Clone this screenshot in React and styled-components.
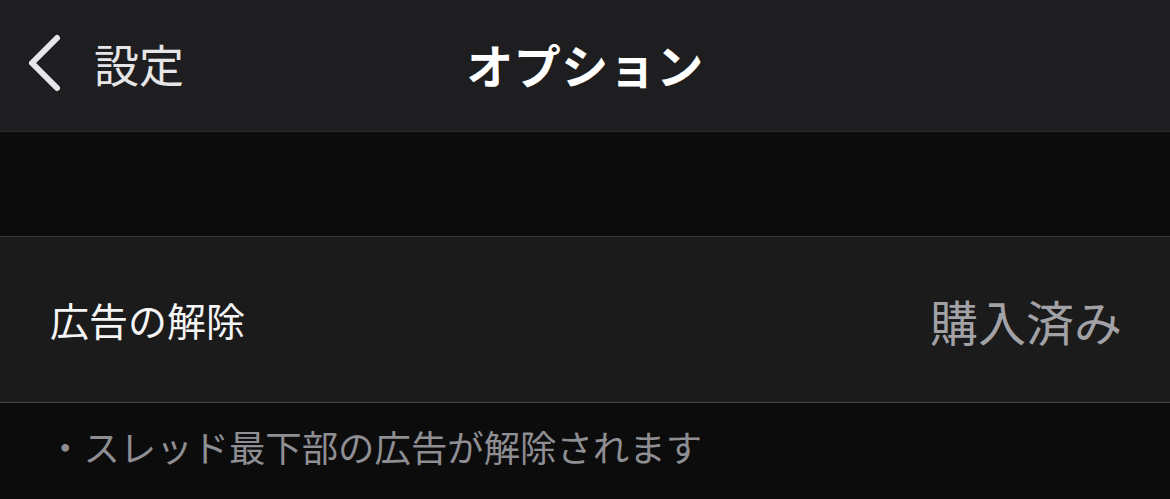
import React from "react";
import styled, { createGlobalStyle } from "styled-components";

const GlobalStyle = createGlobalStyle`
  html, body {
    margin: 0;
    padding: 0;
    background-color: #0c0c0c;
  }
  body {
    font-family: "Noto Sans CJK JP", "Noto Sans", sans-serif;
  }
`;

const Screen = styled.div`
  width: 1170px;
  height: 499px;
  overflow: hidden;
  background-color: #0c0c0c;
  display: flex;
  flex-direction: column;
`;

const NavBar = styled.header`
  height: 132px;
  box-sizing: border-box;
  padding-bottom: 5px;
  flex-shrink: 0;
  background-color: #1e1e20;
  border-bottom: 1px solid #2c2c2e;
  display: grid;
  grid-template-columns: 1fr auto 1fr;
  align-items: center;
`;

const BackButton = styled.div`
  display: flex;
  align-items: center;
  gap: 32px;
  padding-left: 26px;
  color: #e6e6e8;
  font-size: 45px;
  line-height: 1;
`;

const Title = styled.h1`
  margin: 0;
  color: #ffffff;
  font-size: 47px;
  font-weight: 700;
  line-height: 1;
  letter-spacing: 0.5px;
`;

const Spacer = styled.div`
  height: 105px;
  box-sizing: border-box;
  flex-shrink: 0;
  border-bottom: 1px solid #3a3a3c;
`;

const Row = styled.div`
  height: 166px;
  box-sizing: border-box;
  flex-shrink: 0;
  background-color: #1b1b1b;
  border-bottom: 1px solid #48484a;
  display: flex;
  align-items: center;
  justify-content: space-between;
  padding: 0 48px 0 50px;
`;

const Label = styled.span`
  color: #f5f5f5;
  font-size: 39px;
  line-height: 1;
`;

const Value = styled.span`
  color: #a2a2a6;
  font-size: 48px;
  line-height: 1;
`;

const Footnote = styled.p`
  margin: 0;
  padding: 22px 0 0 47px;
  color: #8e8e93;
  font-size: 36.4px;
  line-height: 1.2;
`;

const Chevron = () => (
  <svg width="36" height="60" viewBox="0 0 36 60" fill="none">
    <path
      d="M31 5 L6 30 L31 55"
      stroke="#e6e6e8"
      strokeWidth="6"
      strokeLinecap="round"
      strokeLinejoin="round"
    />
  </svg>
);

export default function App() {
  return (
    <>
      <GlobalStyle />
      <Screen>
        <NavBar>
          <BackButton>
            <Chevron />
            <span>設定</span>
          </BackButton>
          <Title>オプション</Title>
          <div />
        </NavBar>
        <Spacer />
        <Row>
          <Label>広告の解除</Label>
          <Value>購入済み</Value>
        </Row>
        <Footnote>・スレッド最下部の広告が解除されます</Footnote>
      </Screen>
    </>
  );
}
